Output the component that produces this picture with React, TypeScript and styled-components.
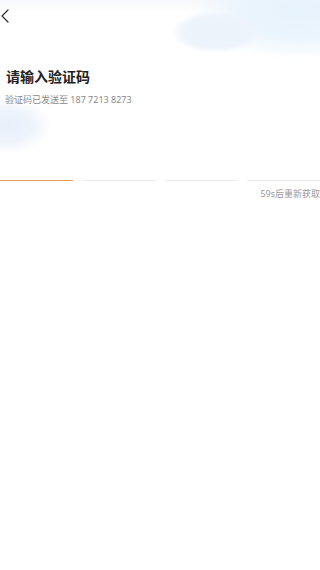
import React from 'react';
import styled, { createGlobalStyle } from 'styled-components';

const GlobalStyle = createGlobalStyle`
  html, body {
    margin: 0;
    padding: 0;
    background: #fff;
  }
  body {
    font-family: "Noto Sans", "Noto Sans CJK SC", sans-serif;
  }
`;

const CODE_LENGTH = 4;

const App: React.FC = () => {
  return (
    <Page>
      <GlobalStyle />
      <Header>
        <BackButton aria-label="返回">
          <svg width="10" height="14" viewBox="0 0 10 14" fill="none">
            <path d="M8 1 L2 7 L8 13" stroke="#333" strokeWidth="1.3" strokeLinecap="round" strokeLinejoin="round" />
          </svg>
        </BackButton>
      </Header>
      <Intro>
        <Title>请输入验证码</Title>
        <Hint>验证码已发送至 187 7213 8273</Hint>
      </Intro>
      <CodeRow>
        {Array.from({ length: CODE_LENGTH }).map((_, i) => (
          <CodeCell key={i} $active={i === 0} />
        ))}
      </CodeRow>
      <Countdown>59s后重新获取</Countdown>
    </Page>
  );
};

const Page = styled.div`
  width: 320px;
  height: 570px;
  overflow: hidden;
  background:
    radial-gradient(ellipse 46px 22px at 216px 32px, #edf3fb 0%, #eef4fb 70%, rgba(238, 244, 251, 0) 100%),
    radial-gradient(ellipse 110px 50px at 300px 10px, #e6f2fc 0%, #ebf5fd 55%, rgba(240, 247, 253, 0) 100%),
    radial-gradient(ellipse 46px 28px at 6px 126px, #e8f0fb 0%, #eef3fb 55%, rgba(244, 247, 253, 0) 100%),
    linear-gradient(180deg, #f7f8f9 0px, #fff 12px);
`;

const Header = styled.div`
  height: 32px;
  display: flex;
  align-items: center;
`;

const BackButton = styled.button`
  border: none;
  background: none;
  padding: 0;
  width: 12px;
  height: 16px;
  display: flex;
  align-items: center;
  cursor: pointer;
`;

const Intro = styled.div`
  padding: 35px 6px 0;
`;

const Title = styled.h1`
  margin: 0;
  font-size: 14px;
  line-height: 19px;
  font-weight: 700;
  color: #222;
`;

const Hint = styled.div`
  margin-top: 8px;
  margin-left: -1px;
  font-size: 9px;
  line-height: 12px;
  color: #8a8a8a;
`;

const CodeRow = styled.div`
  margin-top: 74px;
  display: grid;
  grid-template-columns: repeat(4, 1fr);
  column-gap: 9px;
  height: 1px;
`;

const CodeCell = styled.div<{ $active: boolean }>`
  height: 1px;
  background: ${p => (p.$active ? '#eaa456' : '#ececec')};
`;

const Countdown = styled.div`
  margin-top: 7px;
  text-align: right;
  font-size: 9px;
  line-height: 12px;
  color: #999;
`;

export default App;
